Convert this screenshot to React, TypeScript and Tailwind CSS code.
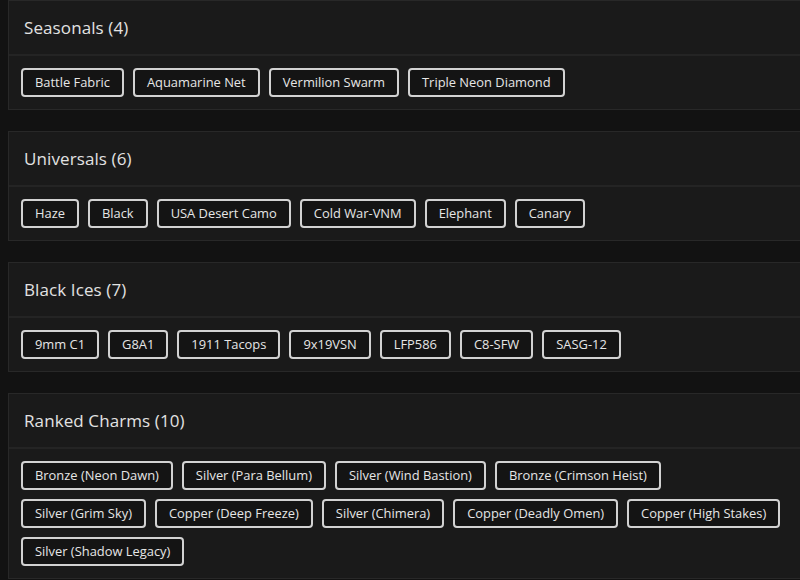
import React from "react";

const sections: { title: string; items: string[] }[] = [
  { title: "Seasonals (4)", items: ["Battle Fabric", "Aquamarine Net", "Vermilion Swarm", "Triple Neon Diamond"] },
  { title: "Universals (6)", items: ["Haze", "Black", "USA Desert Camo", "Cold War-VNM", "Elephant", "Canary"] },
  { title: "Black Ices (7)", items: ["9mm C1", "G8A1", "1911 Tacops", "9x19VSN", "LFP586", "C8-SFW", "SASG-12"] },
  {
    title: "Ranked Charms (10)",
    items: [
      "Bronze (Neon Dawn)",
      "Silver (Para Bellum)",
      "Silver (Wind Bastion)",
      "Bronze (Crimson Heist)",
      "Silver (Grim Sky)",
      "Copper (Deep Freeze)",
      "Silver (Chimera)",
      "Copper (Deadly Omen)",
      "Copper (High Stakes)",
      "Silver (Shadow Legacy)",
    ],
  },
];

export default function App() {
  return (
    <div
      className="w-[800px] h-[580px] overflow-hidden bg-[#121212] pl-2 pt-0 flex flex-col gap-[21px]"
      style={{ fontFamily: '"Open Sans", "Noto Sans", sans-serif' }}
    >
      {sections.map((s) => (
        <div key={s.title} className="w-[820px] shrink-0 bg-[#1a1a1a] border border-[#282828]">
          <div className="h-[55px] flex items-center px-[15px] border-b-2 border-[#242424]">
            <span className="text-[17px] font-medium text-[#e2e2e2] tracking-[0.1px]">{s.title}</span>
          </div>
          <div className="flex flex-wrap gap-[9px] px-3 pt-[12px] pb-[12px] w-[790px]">
            {s.items.map((it) => (
              <span
                key={it}
                className="h-[29px] flex items-center px-[12px] rounded-[4px] border-2 border-[#d2d2d2] bg-[#141414] text-[12.9px] text-[#e6e6e6]"
              >
                {it}
              </span>
            ))}
          </div>
        </div>
      ))}
    </div>
  );
}
